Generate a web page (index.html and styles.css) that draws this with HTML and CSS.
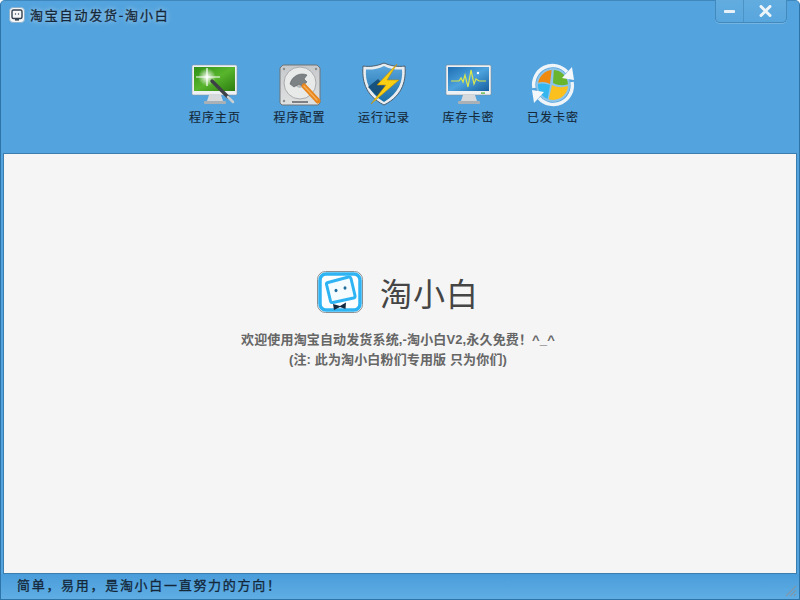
FILE: index.html
```html
<!DOCTYPE html>
<html lang="zh-CN">
<head>
<meta charset="utf-8">
<title>淘宝自动发货-淘小白</title>
<link rel="stylesheet" href="styles.css">
</head>
<body>
<div class="window">
  <header class="titlebar">
    <div class="title-left">
      <svg class="app-icon" viewBox="0 0 16 16"><rect x="0.5" y="0.5" width="15" height="15" rx="3.5" fill="#f4f6f8" stroke="#8fb4cf"/><rect x="3" y="3" width="10" height="8.5" rx="1.5" fill="none" stroke="#33414f" stroke-width="1.4"/><rect x="6" y="12" width="4" height="1.6" fill="#33414f"/><circle cx="6.5" cy="7" r=".7" fill="#33414f"/><circle cx="9.5" cy="7" r=".7" fill="#33414f"/></svg>
      <span class="title-text">淘宝自动发货-淘小白</span>
    </div>
    <div class="win-buttons">
      <div class="win-btn win-min"><svg width="11" height="3" viewBox="0 0 11 3"><rect width="11" height="3" rx=".8" fill="#e8f1f8"/></svg></div>
      <div class="win-btn win-close"><svg width="13" height="12" viewBox="0 0 13 12"><path d="M2 1.5 11 10.5M11 1.5 2 10.5" stroke="#eef5fa" stroke-width="3" stroke-linecap="round"/></svg></div>
    </div>
  </header>
  <nav class="toolbar">
    <div class="tool">
      <svg class="tool-icon" viewBox="0 0 48 48">
        <defs><linearGradient id="g1" x1="0" y1="0" x2="1" y2="1"><stop offset="0" stop-color="#2f8f15"/><stop offset=".5" stop-color="#58b52c"/><stop offset="1" stop-color="#2b7c10"/></linearGradient>
        <radialGradient id="g1b"><stop offset="0" stop-color="#fff"/><stop offset="1" stop-color="#fff" stop-opacity="0"/></radialGradient></defs>
        <rect x="1" y="4" width="45" height="30" rx="1.5" fill="#eef1f3" stroke="#8d9aa4" stroke-width=".6"/>
        <rect x="3" y="6" width="41" height="24" fill="url(#g1)"/>
        <path d="M18 34h12l2 6H16z" fill="#d5d9dc"/><rect x="13" y="40" width="22" height="3" rx="1" fill="#aab1b6"/>
        <circle cx="16" cy="16" r="9" fill="url(#g1b)"/>
        <path d="M16 7v18M5 16h24" stroke="#fff" stroke-width="1.2"/>
        <path d="M21 20 37 36" stroke="#3d4044" stroke-width="3.4" stroke-linecap="round"/>
        <path d="M37 36 42 41" stroke="#c9ced2" stroke-width="2.6" stroke-linecap="round"/>
      </svg>
      <span class="tool-label">程序主页</span>
    </div>
    <div class="tool">
      <svg class="tool-icon" viewBox="0 0 48 48">
        <defs><linearGradient id="g2" x1="0" y1="0" x2="0" y2="1"><stop offset="0" stop-color="#c6c9cb"/><stop offset="1" stop-color="#e0e1e1"/></linearGradient></defs>
        <path d="M7 4h34l3 3v35l-2 2H6l-2-2V7z" fill="url(#g2)" stroke="#6f7478" stroke-width="1"/>
        <circle cx="24" cy="22" r="16" fill="#e8e9e9" stroke="#a9acae"/>
        <circle cx="24" cy="22" r="5" fill="#b5b8ba"/>
        <rect x="16" y="40" width="16" height="2" fill="#7c8084"/>
        <circle cx="8" cy="8" r="1.2" fill="#8a8e91"/><circle cx="40" cy="8" r="1.2" fill="#8a8e91"/><circle cx="8" cy="40" r="1.2" fill="#8a8e91"/><circle cx="40" cy="40" r="1.2" fill="#8a8e91"/>
        <path d="M14 23c2-8 10-12 17-9l-3 4 3 3-5 4-3-2-5 3z" fill="#7d8285" stroke="#5b5f62" stroke-width=".6"/>
        <path d="M28 25 42 40" stroke="#e7851c" stroke-width="5" stroke-linecap="round"/>
        <path d="M28 25 41 39" stroke="#f7b05a" stroke-width="1.4" stroke-linecap="round"/>
      </svg>
      <span class="tool-label">程序配置</span>
    </div>
    <div class="tool">
      <svg class="tool-icon" viewBox="0 0 48 48">
        <defs><linearGradient id="g3" x1="0" y1="0" x2="0" y2="1"><stop offset="0" stop-color="#5aa5dc"/><stop offset="1" stop-color="#1a6ea6"/></linearGradient></defs>
        <path d="M24 2C17 5 10 6 3 5c-1 13 1 29 21 39C44 34 46 18 45 5c-7 1-14 0-21-3z" fill="#e9edf0" stroke="#4b5f70" stroke-width="1"/>
        <path d="M24 5C18 8 12 9 6 8.500 5 20 9 32 24 41 39 32 43 20 42 8.500 36 9 30 8 24 5z" fill="url(#g3)"/>
        <path d="M8 26 18 18l8 8-8 10z" fill="#17527c"/>
        <path d="M37 3 17 24h9L11 43 39 19H27z" fill="#f8cf12" stroke="#c48c06" stroke-width=".6"/>
      </svg>
      <span class="tool-label">运行记录</span>
    </div>
    <div class="tool">
      <svg class="tool-icon" viewBox="0 0 48 48">
        <defs><linearGradient id="g4" x1="0" y1="0" x2="1" y2="1"><stop offset="0" stop-color="#1f6fb3"/><stop offset=".5" stop-color="#4da3de"/><stop offset="1" stop-color="#155e9f"/></linearGradient></defs>
        <rect x="1" y="4" width="45" height="30" rx="1.500" fill="#eef1f3" stroke="#7f8d98" stroke-width=".6"/>
        <rect x="3" y="6" width="41" height="24" fill="url(#g4)"/>
        <path d="M6 20h8l2-3 2 4 2-7 3 12 3-17 3 14 2-5 3 2h7" fill="none" stroke="#d9e64b" stroke-width="1.2"/>
        <circle cx="33" cy="12" r="1.200" fill="#fff"/>
        <rect x="36" y="31.500" width="4" height="1.200" fill="#4caf30"/>
        <path d="M18 34h12l2 6H16z" fill="#d5d9dc"/><rect x="13" y="40" width="22" height="3" rx="1" fill="#aab1b6"/>
      </svg>
      <span class="tool-label">库存卡密</span>
    </div>
    <div class="tool">
      <svg class="tool-icon" viewBox="0 0 48 48">
        <defs><clipPath id="flag"><circle cx="24" cy="24" r="15"/></clipPath></defs>
        <circle cx="24" cy="24" r="17" fill="#8cc4ea"/>
        <path d="M5 27A19 19 0 0 1 38 11" fill="none" stroke="#eef4f8" stroke-width="3.500"/>
        <path d="M43 21A19 19 0 0 1 10 37" fill="none" stroke="#eef4f8" stroke-width="3.500"/>
        <g clip-path="url(#flag)">
          <path d="M23 6H6v17c6-3 11-2 15 0z" fill="#ee8a0f"/>
          <path d="M25 6c1 1 3 3 4 3 4 1 8 2 13 0v13c-6 3-12 3-18 0z" fill="#69b52e"/>
          <path d="M21 24c-5-2-10-2-15 0v18h12z" fill="#34b6ee"/>
          <path d="M23 24c6 3 12 3 19 0v18H19z" fill="#fbc01e"/>
        </g>
        <path d="M33 17 45 19 43 6z" fill="#f4f8fb"/>
        <path d="M15 31 3 29 5 42z" fill="#f4f8fb"/>
      </svg>
      <span class="tool-label">已发卡密</span>
    </div>
  </nav>
  <main class="content">
    <div class="brand">
      <svg class="brand-icon" viewBox="0 0 46 42">
        <rect x=".5" y=".5" width="45" height="41" rx="8" fill="#fff" stroke="#8a8f93" stroke-width="1"/>
        <rect x="3" y="3" width="40" height="36" rx="6" fill="#fdfeff" stroke="#2fb4f3" stroke-width="3.500"/>
        <path d="M11 11.500 31.500 6q2-.5 2.500 1.500l4 17q.5 2-1.500 2.500L16 31.500q-2 .5-2.500-1.500L9.500 13.500q-.5-1.500 1.500-2z" fill="#f5fcff" stroke="#2fb4f3" stroke-width="3"/>
        <ellipse cx="19" cy="19.500" rx="1.500" ry="1.800" fill="#1e6c9a"/><ellipse cx="28" cy="17" rx="1.500" ry="1.800" fill="#1e6c9a"/>
        <path d="M16 33l7 2 6-3.500-.5 6.500-5.500-2-6 3z" fill="#13293f"/>
      </svg>
      <span class="brand-name">淘小白</span>
    </div>
    <p class="welcome">欢迎使用淘宝自动发货系统,-淘小白V2,永久免费！^_^</p>
    <p class="welcome">(注: 此为淘小白粉们专用版 只为你们)</p>
  </main>
  <footer class="statusbar">
    <span class="status-text">简单，易用，是淘小白一直努力的方向！</span>
    <svg class="grip" width="12" height="12" viewBox="0 0 12 12"><path d="M11 1 1 11M11 5 5 11M11 9 9 11" stroke="#7d97ab" stroke-width="1.200"/></svg>
  </footer>
</div>
</body>
</html>
```
FILE: styles.css
```css
* { box-sizing: border-box; }
html, body { margin: 0; padding: 0; }
body { width: 800px; height: 600px; overflow: hidden; font-family: "Noto Sans CJK SC", "Liberation Sans", sans-serif; text-spacing-trim: space-all; }
.window {
  width: 800px; height: 600px; display: flex; flex-direction: column;
  background: #52a3de; border: 1px solid #2d74a8; border-top-color: #3f88bd; border-radius: 5px 5px 0 0;
}
.titlebar { height: 29px; display: flex; justify-content: space-between; align-items: flex-start; padding: 0 12px 0 8px; flex: none; }
.title-left { display: flex; align-items: center; gap: 5px; height: 27px; }
.app-icon { width: 16px; height: 16px; }
.title-text {
  font-size: 13px; letter-spacing: 1.8px; color: #16293a; -webkit-text-stroke: .3px #16293a;
  text-shadow: 0 0 5px rgba(255,255,255,.55), 0 0 8px rgba(255,255,255,.35);
}
.win-buttons {
  display: flex; height: 23px; margin-top: -1px; border: 1px solid #4389bb; border-top: 0; border-radius: 0 0 5px 5px;
  background: linear-gradient(#62acdf, #58a6de); box-shadow: 0 1px 0 rgba(255,255,255,.2);
}
.win-btn { display: flex; align-items: center; justify-content: center; height: 100%; }
.win-min { width: 28px; border-right: 1px solid #4c93c6; }
.win-close { width: 42px; }
.toolbar { height: 123px; flex: none; display: flex; justify-content: center; padding: 31px 32px 0 0; }
.tool { width: 84.5px; display: flex; flex-direction: column; align-items: center; }
.tool-icon { width: 48px; height: 48px; }
.tool-label { margin-top: -1px; font-size: 12px; line-height: 18px; letter-spacing: 1px; color: #16293a; -webkit-text-stroke: .15px #16293a; }
.content {
  flex: 1; margin: 0 2px; background: #f5f5f5; border: 1px solid #3a7dae;
  display: flex; flex-direction: column; align-items: center; padding: 117px 4px 0 0;
}
.brand { display: flex; align-items: center; gap: 17px; height: 42px; margin-bottom: 17px; }
.brand-icon { width: 46px; height: 42px; }
.brand-name { font-size: 32px; line-height: 42px; color: #454545; font-weight: 400; letter-spacing: 1px; }
.welcome { margin: 0; font-size: 13px; line-height: 20px; font-weight: 700; color: #666; letter-spacing: .14px; font-family: "Liberation Sans", "Noto Sans CJK SC", sans-serif; }
.statusbar {
  height: 25px; flex: none; display: flex; justify-content: space-between; align-items: center; padding: 0 2px 5px 16px;
  background: linear-gradient(#4a9ddb, #5fade3);
}
.status-text { font-size: 13px; letter-spacing: 1.7px; color: #14283a; -webkit-text-stroke: .3px #14283a; }
.grip { align-self: flex-end; margin-bottom: -3px; }
```
